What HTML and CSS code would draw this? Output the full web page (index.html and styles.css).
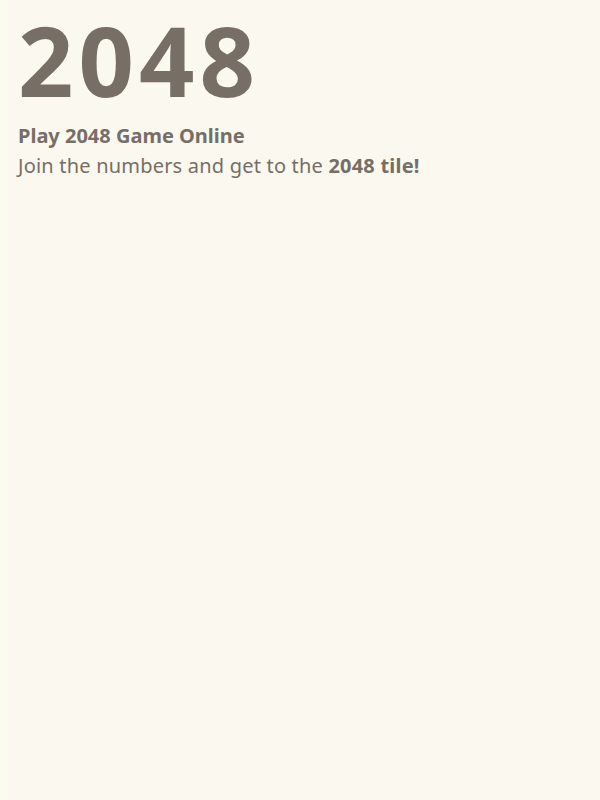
FILE: index.html
```html
<!DOCTYPE html>
<html lang="en">
<head>
<meta charset="utf-8">
<title>2048</title>
<link rel="stylesheet" href="styles.css">
</head>
<body>
<div class="page">
  <h1 class="title">2048</h1>
  <p class="lead">Play 2048 Game Online</p>
  <p class="intro">Join the numbers and get to the <strong>2048 tile!</strong></p>
</div>
</body>
</html>
```
FILE: styles.css
```css
html {
  background: #fcfbef;
}
body {
  margin: 0 0 0 8px;
  min-height: 800px;
  background: #faf8ef;
  color: #776e65;
  font-family: "Noto Sans", sans-serif;
  font-size: 20px;
}
.page {
  padding: 0 10px;
}
.title {
  margin: 0;
  padding-top: 6px;
  font-size: 97px;
  font-weight: 700;
  line-height: 1.1;
  letter-spacing: 5px;
}
.lead {
  margin: 8px 0 0;
  font-weight: 700;
  line-height: 30px;
}
.intro {
  margin: 0;
  line-height: 30px;
  letter-spacing: 0.2px;
}
.intro strong {
  font-weight: 700;
}
```
